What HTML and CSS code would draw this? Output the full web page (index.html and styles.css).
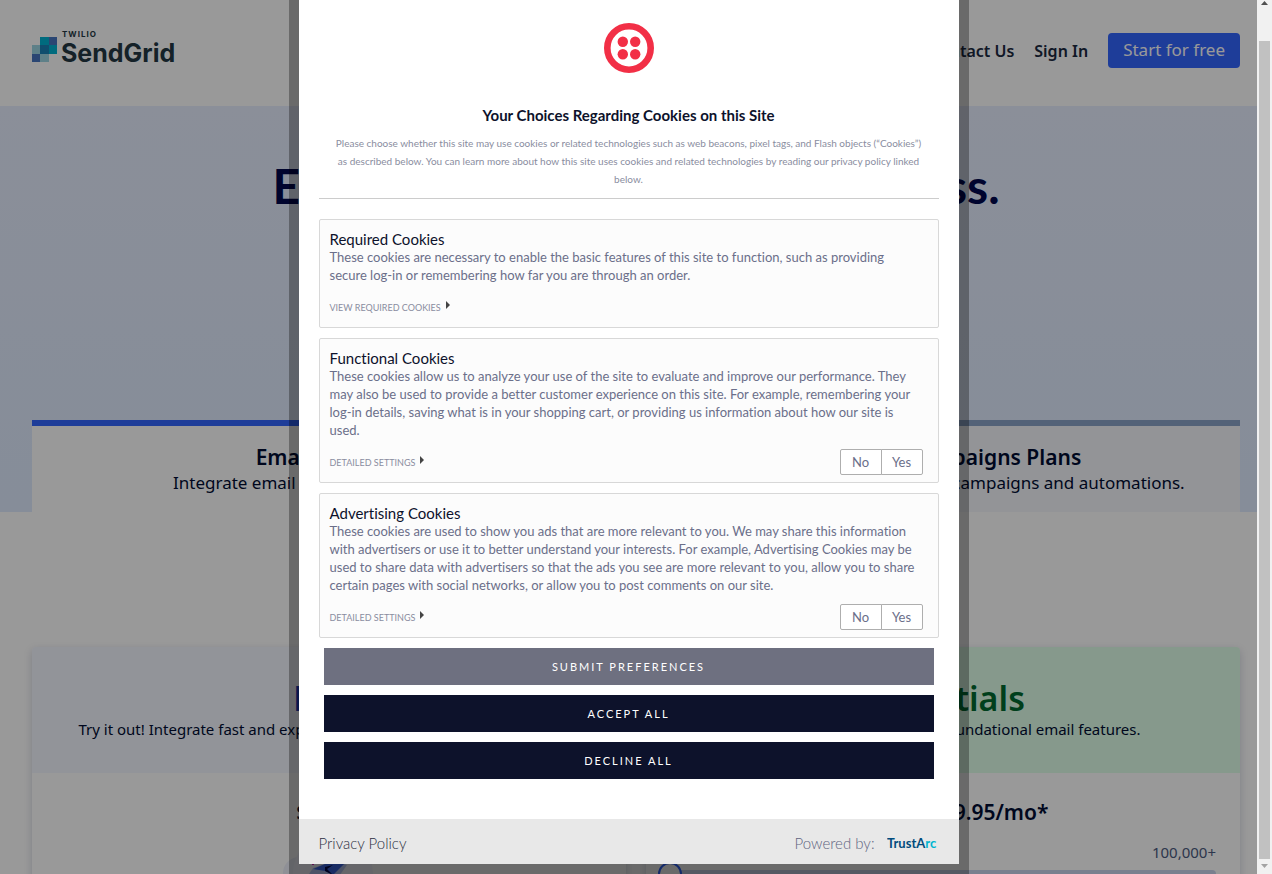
FILE: index.html
```html
<!DOCTYPE html>
<html lang="en">
<head>
<meta charset="utf-8">
<title>SendGrid Pricing</title>
<link rel="stylesheet" href="styles.css">
</head>
<body>
<div class="viewport">
  <div class="page">
    <header class="site-header">
      <svg class="brand" width="148" height="38" viewBox="0 0 148 38" role="img" aria-label="Twilio SendGrid">
        <rect x="8" y="7" width="9" height="9" fill="#00b2d3"/>
        <rect x="17" y="7" width="8" height="9" fill="#4675c0"/>
        <rect x="0" y="15" width="8" height="9" fill="#9dd6e3"/>
        <rect x="8" y="15" width="9" height="9" fill="#1a82b8"/>
        <rect x="17" y="15" width="8" height="9" fill="#00b2d3"/>
        <rect x="0" y="24" width="8" height="8" fill="#4675c0"/>
        <rect x="8" y="24" width="9" height="8" fill="#9dd6e3"/>
        <text x="30" y="7" class="brand-small">TWILIO</text>
        <text x="29" y="32" class="brand-large">SendGrid</text>
      </svg>
      <nav class="site-nav">
        <a href="#">Contact Us</a>
        <a href="#">Sign In</a>
        <a href="#" class="cta">Start for free</a>
      </nav>
    </header>
    <section class="hero">
      <h1>Excellent email for every business.</h1>
      <div class="tabs">
        <a href="#" class="tab active"><strong>Email API Plans</strong><span>Integrate email into your app or website</span></a>
        <a href="#" class="tab"><strong>Marketing Campaigns Plans</strong><span>Build contact lists and send with campaigns and automations.</span></a>
      </div>
    </section>
    <section class="plans">
      <article class="plan">
        <div class="plan-head"><h2>Free</h2><p>Try it out! Integrate fast and explore email essentials for 100 messages.</p></div>
        <div class="plan-body">
          <p class="price">$0/mo</p>
          <svg class="art" width="100" height="60" viewBox="0 0 100 60" aria-hidden="true">
            <circle cx="20" cy="26" r="16" fill="#eef1fb"/><circle cx="54" cy="26" r="40" fill="#f4f6fd"/>
            <path d="M28 30l6-9 12-4 14-2 8 3-10 14z" fill="#b9c9f7"/>
            <path d="M34 22l12-5 22-3-14 14-8-4z" fill="#3f6bf0"/>
            <path d="M46 20l8-2-6 4 6 6-8-4z" fill="#00084d"/>
            <rect x="33" y="16" width="2" height="2" fill="#e01ec0"/>
          </svg>
        </div>
      </article>
      <article class="plan essentials">
        <div class="plan-head"><h2>Essentials</h2><p>Build up sending scale with foundational email features.</p></div>
        <div class="plan-body">
          <p class="price">Starts at $19.95/mo*</p>
          <p class="limit">100,000+</p>
          <input class="volume" type="range" min="0" max="100" value="0" aria-label="Monthly emails">
        </div>
      </article>
    </section>
  </div>
  <div class="shade">
    <section class="modal" role="dialog" aria-labelledby="modal-title">
      <div class="modal-main">
        <svg class="twilio" width="50" height="50" viewBox="0 0 50 50" role="img" aria-label="Twilio">
          <circle cx="25" cy="25" r="21.7" fill="none" stroke="#f22f46" stroke-width="6.6"/>
          <g fill="#f22f46"><circle cx="18.8" cy="18.8" r="5.2"/><circle cx="31.2" cy="18.8" r="5.2"/><circle cx="18.8" cy="31.2" r="5.2"/><circle cx="31.2" cy="31.2" r="5.2"/></g>
        </svg>
        <h2 id="modal-title">Your Choices Regarding Cookies on this Site</h2>
        <p class="intro">Please choose whether this site may use cookies or related technologies such as web beacons, pixel tags, and Flash objects (“Cookies”)<br>as described below. You can learn more about how this site uses cookies and related technologies by reading our privacy policy linked<br>below.</p>
        <div class="choices">
          <section class="choice">
            <h3>Required Cookies</h3>
            <p>These cookies are necessary to enable the basic features of this site to function, such as providing<br>secure log-in or remembering how far you are through an order.</p>
            <div class="choice-foot"><a href="#">VIEW REQUIRED COOKIES</a></div>
          </section>
          <section class="choice">
            <h3>Functional Cookies</h3>
            <p>These cookies allow us to analyze your use of the site to evaluate and improve our performance. They<br>may also be used to provide a better customer experience on this site. For example, remembering your<br>log-in details, saving what is in your shopping cart, or providing us information about how our site is<br>used.</p>
            <div class="choice-foot"><a href="#">DETAILED SETTINGS</a><div class="switch"><button>No</button><button>Yes</button></div></div>
          </section>
          <section class="choice">
            <h3>Advertising Cookies</h3>
            <p>These cookies are used to show you ads that are more relevant to you. We may share this information<br>with advertisers or use it to better understand your interests. For example, Advertising Cookies may be<br>used to share data with advertisers so that the ads you see are more relevant to you, allow you to share<br>certain pages with social networks, or allow you to post comments on our site.</p>
            <div class="choice-foot"><a href="#">DETAILED SETTINGS</a><div class="switch"><button>No</button><button>Yes</button></div></div>
          </section>
        </div>
        <div class="actions">
          <button class="muted">SUBMIT PREFERENCES</button>
          <button>ACCEPT ALL</button>
          <button>DECLINE ALL</button>
        </div>
      </div>
      <footer class="modal-foot">
        <a href="#">Privacy Policy</a>
        <span class="powered">Powered by:</span>
        <svg width="52" height="18" viewBox="0 0 52 18" role="img" aria-label="TrustArc"><text x="0" y="14" class="trust">TrustA<tspan class="trust-end">rc</tspan></text></svg>
      </footer>
    </section>
  </div>
</div>
<div class="scrollbar" aria-hidden="true">
  <svg width="15" height="17" viewBox="0 0 15 17"><path d="M4 5h7L7.500 1z" fill="#505050"/></svg>
  <div class="thumb"></div>
  <svg width="15" height="15" viewBox="0 0 15 15"><path d="M4 5h7L7.500 9z" fill="#a3a3a3"/></svg>
</div>
</body>
</html>
```
FILE: styles.css
```css
* { box-sizing: border-box; }
body { margin: 0; display: flex; height: 100vh; overflow: hidden; font-family: Lato, sans-serif; color: #000d33; background: #fff; }
h1, h2, h3, p { margin: 0; }
a { color: inherit; text-decoration: none; }
button { font-family: inherit; cursor: pointer; }

.viewport { position: relative; flex: 1; overflow: hidden; font-family: "Noto Sans", sans-serif; }
.site-header { display: flex; justify-content: space-between; align-items: flex-start; height: 106px; padding: 30px 17px 0 32px; }
.brand { overflow: visible; }
.brand-small { font: 700 8px Inter, sans-serif; letter-spacing: 1px; fill: #233843; }
.brand-large { font: 700 25px Inter, sans-serif; fill: #233843; }
.site-nav { display: flex; align-items: center; gap: 20px; padding-top: 3px; font-size: 16px; font-weight: 600; color: #1a2840; }
.cta { padding: 4px 15px 6px; font-size: 17px; line-height: 25px; border-radius: 4px; background: #3366ff; color: #fff; font-weight: 400; }

.hero { display: flex; flex-direction: column; height: 406px; padding: 50px 17px 0 32px; background: linear-gradient(#e8eeff, #dfecff); }
h1 { flex: none; font-family: Lato, sans-serif; font-size: 48px; line-height: 60px; font-weight: 700; text-align: center; color: #00084d; }
.tabs { display: grid; grid-template-columns: 1fr 1fr; align-items: start; margin-top: 204px; }
.tab { display: flex; flex-direction: column; height: 92px; padding-top: 18px; border-top: 6px solid #8ba3c9; background: #f6f7fc; text-align: center; white-space: nowrap; font-size: 17px; line-height: 26px; }
.tab.active { height: 140px; border-color: #3366ff; background: #fff; }
.tab strong { font-size: 21px; font-weight: 600; }

.plans { display: grid; grid-template-columns: 1fr 1fr; gap: 20px; padding: 135px 17px 0 32px; }
.plan { height: 420px; border-radius: 4px; overflow: hidden; background: #fff; box-shadow: 0 3px 8px rgba(0, 20, 80, .18); text-align: center; }
.plan-head { height: 126px; padding-top: 30px; background: #f4f7ff; }
.plan-head h2 { font-size: 34px; line-height: 42px; font-weight: 600; color: #1838b8; }
.plan-head p { font-size: 15px; line-height: 20px; white-space: nowrap; }
.essentials .plan-head { background: #dfffe9; }
.essentials .plan-head h2 { color: #00692f; }
.plan-body { padding: 24px 24px 0; }
.price { font-size: 21px; line-height: 30px; font-weight: 600; }
.limit { margin-top: 15px; font-size: 15px; line-height: 20px; text-align: right; color: #4b5b80; }
.art { margin-top: 20px; }
.volume { display: block; width: calc(100% + 12px); height: 24px; margin: 0 0 0 -12px; appearance: none; background: none; }
.volume::-webkit-slider-runnable-track { height: 8px; border-radius: 4px; background: #ccd5ee; }
.volume::-webkit-slider-thumb { appearance: none; width: 24px; height: 24px; margin-top: -8px; border: 2px solid #3366ff; border-radius: 50%; background: #fff; }

.shade { position: absolute; inset: 0; display: flex; justify-content: center; background: rgba(0, 0, 0, .4); font-family: Lato, sans-serif; font-variant-ligatures: none; }
.modal { display: flex; flex-direction: column; width: 680px; max-width: 100%; border: solid rgba(0, 0, 0, .3); border-width: 0 10px 10px; background: #fff; background-clip: padding-box; }
.modal-main { flex: 1; display: flex; flex-direction: column; padding: 23px 20px 0; }
.twilio { align-self: center; }
.modal-main h2 { margin-top: 32px; font-size: 15px; line-height: 20px; font-weight: 700; text-align: center; color: #0d122b; }
.intro { margin-top: 9px; padding-bottom: 10px; border-bottom: 1px solid #ccc; font-size: 10px; line-height: 18px; text-align: center; white-space: nowrap; color: #8a8da0; }
.choices { display: flex; flex-direction: column; gap: 10px; margin-top: 20px; }
.choice { padding: 10px 10px 7px; border: 1px solid #d8d8d8; border-radius: 2px; background: #fcfcfc; }
.choice h3 { font-size: 15px; line-height: 18px; font-weight: 400; color: #0d122b; }
.choice p { font-size: 13px; line-height: 18px; white-space: nowrap; color: #6b6f8a; }
.choice-foot { display: flex; justify-content: space-between; align-items: center; height: 26px; margin-top: 10px; padding-right: 5px; }
.choice-foot a { display: flex; align-items: center; gap: 5px; font-size: 9px; color: #8a8da0; }
.choice-foot a::after { content: ""; border: solid transparent; border-width: 4px 0 4px 4px; border-left-color: #444; margin-bottom: 4px; }
.switch { display: flex; }
.switch button { width: 42px; height: 26px; padding: 0; border: 1px solid #aeaeae; border-radius: 2px 0 0 2px; background: #fff; font-size: 13px; color: #6b6f8a; }
.switch button + button { margin-left: -1px; border-radius: 0 2px 2px 0; }
.actions { display: grid; gap: 10px; padding: 10px 5px 0; }
.actions button { height: 37px; padding: 0; border: 0; background: #0d122b; color: #fff; font-size: 11px; letter-spacing: 2px; }
.actions .muted { background: #6e7080; }
.modal-foot { display: flex; align-items: center; height: 45px; padding: 2px 20px 0; background: #e8e8e8; font-size: 15px; font-weight: 300; color: #2c2f42; }
.powered { margin-left: auto; margin-right: 12px; color: #606480; }
.trust { font: 700 13px Lato, sans-serif; fill: #004c7d; }
.trust-end { fill: #00b5d0; }

.scrollbar { display: flex; flex-direction: column; width: 15px; background: #f1f1f1; }
.thumb { flex: 1; margin: 24px 2px 0; background: #c1c1c1; }
```
